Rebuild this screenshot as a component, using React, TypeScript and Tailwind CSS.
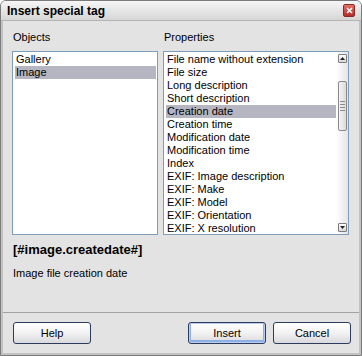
import { useState } from 'react';

const objects = ['Gallery', 'Image'];

const properties = [
  'File name without extension',
  'File size',
  'Long description',
  'Short description',
  'Creation date',
  'Creation time',
  'Modification date',
  'Modification time',
  'Index',
  'EXIF: Image description',
  'EXIF: Make',
  'EXIF: Model',
  'EXIF: Orientation',
  'EXIF: X resolution',
];

function ArrowBox({ dir }: { dir: 'up' | 'down' }) {
  return (
    <div className="w-[9px] h-[9px] border border-[#7d7d7d] rounded-[1px] bg-gradient-to-b from-white to-[#d8d8d8] flex items-center justify-center">
      <svg width="5" height="3" viewBox="0 0 5 3">
        {dir === 'up' ? <path d="M0 3 L2.5 0 L5 3 Z" fill="#222" /> : <path d="M0 0 L2.5 3 L5 0 Z" fill="#222" />}
      </svg>
    </div>
  );
}

function ScrollBar() {
  return (
    <div className="w-[12px] flex flex-col items-center bg-gradient-to-r from-white to-[#e4e4ea] pt-[2px] pb-[2px]">
      <ArrowBox dir="up" />
      <div className="mt-[18px] w-[9px] h-[50px] border border-[#8a8a8a] rounded-[2px] bg-gradient-to-r from-[#f4f4f4] to-[#dadada] flex flex-col items-center justify-center gap-[2px]">
        <div className="w-[5px] h-px bg-[#8c8c8c]" />
        <div className="w-[5px] h-px bg-[#8c8c8c]" />
        <div className="w-[5px] h-px bg-[#8c8c8c]" />
        <div className="w-[5px] h-px bg-[#8c8c8c]" />
      </div>
      <div className="flex-1" />
      <ArrowBox dir="down" />
    </div>
  );
}

export default function App() {
  const [obj, setObj] = useState('Image');
  const [prop, setProp] = useState('Creation date');

  const btn =
    'w-[78px] h-[22px] rounded-[3px] border border-[#2c3b5c] bg-gradient-to-b from-white via-[#f2f2f2] to-[#d9d9de] text-[11px] text-black';

  return (
    <div className="w-[362px] h-[356px] flex flex-col bg-[#e3e3e3] border border-[#7b7b7b] rounded-t-[6px] overflow-hidden font-['Liberation_Sans',Arial,sans-serif] text-[11px] text-black">
      <div className="h-[20px] flex items-center justify-between pl-[6px] pr-[6px] bg-gradient-to-b from-[#f6f6f6] to-[#d6d6d6] border-b border-[#b4b4b4]">
        <span className="font-bold text-[12px] leading-[14px]">Insert special tag</span>
        <div className="w-[12px] h-[13px] rounded-[2px] bg-gradient-to-b from-[#e0706a] to-[#b42c26] border border-[#8a2a24] flex items-center justify-center">
          <svg width="7" height="7" viewBox="0 0 7 7">
            <path d="M1 1 L6 6 M6 1 L1 6" stroke="white" strokeWidth="1.6" />
          </svg>
        </div>
      </div>

      <div className="flex-1 flex flex-col border-x-2 border-b-2 border-[#c2c2c2]">
        <div className="flex gap-[5px] pl-[9px] pr-[10px] pt-[10px]">
          <div className="w-[146px] flex flex-col">
            <div className="h-[13px] leading-[13px] pl-[1px] mb-[7px]">Objects</div>
            <div className="h-[184px] border border-[#7f9db9] bg-white pl-[2px] pr-[1px] py-[1px]">
              {objects.map(o => (
                <div
                  key={o}
                  onClick={() => setObj(o)}
                  className={`h-[13px] leading-[13px] pl-[1px] ${obj === o ? 'bg-[#b6b6c2]' : ''}`}
                >
                  {o}
                </div>
              ))}
            </div>
          </div>

          <div className="flex-1 flex flex-col">
            <div className="h-[13px] leading-[13px] pl-[1px] mb-[7px]">Properties</div>
            <div className="h-[184px] border border-[#7f9db9] bg-white flex">
              <div className="flex-1 pl-[2px] py-[1px] overflow-hidden">
                {properties.map(p => (
                  <div
                    key={p}
                    onClick={() => setProp(p)}
                    className={`h-[13px] leading-[13px] pl-[1px] whitespace-nowrap ${prop === p ? 'bg-[#b6b6c2]' : ''}`}
                  >
                    {p}
                  </div>
                ))}
              </div>
              <ScrollBar />
            </div>
          </div>
        </div>

        <div className="pl-[10px] mt-[7px] h-[16px] leading-[16px] font-bold text-[13px]">[#image.createdate#]</div>
        <div className="pl-[10px] mt-[9px] h-[13px] leading-[13px]">Image file creation date</div>

        <div className="flex-1" />
        <div className="border-t border-[#a2a2a2]" />

        <div className="flex items-center pl-[10px] pr-[8px] pt-[9px] pb-[9px]">
          <button className={btn}>Help</button>
          <div className="flex-1" />
          <button className={`${btn} shadow-[inset_0_0_0_1px_#b9cdf0,inset_0_-1px_0_2px_#8fb0e6]`}>Insert</button>
          <button className={`${btn} ml-[7px]`}>Cancel</button>
        </div>
      </div>
    </div>
  );
}
